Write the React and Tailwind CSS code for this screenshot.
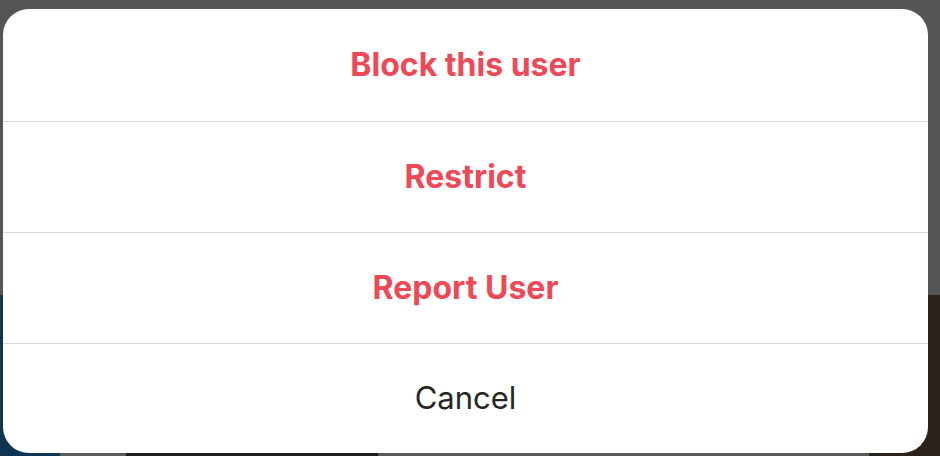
export default function App() {
  const actions = [
    { label: 'Block this user', h: 'h-[113px]' },
    { label: 'Restrict', h: 'h-[111px]' },
    { label: 'Report User', h: 'h-[111px]' },
  ];

  return (
    <div className="relative w-[940px] h-[456px] overflow-hidden bg-[#555555]" style={{ fontFamily: 'Inter, "Liberation Sans", sans-serif' }}>
      {/* page behind the dialog */}
      <div className="flex flex-col h-full">
        <div className="h-[295px] bg-[#555555]" />
        <div className="flex flex-1">
          <div className="w-[60px] bg-[#0f3452]" />
          <div className="w-[66px] bg-[#5a5a5a]" />
          <div className="w-[252px] bg-[#1e1e1e]" />
          <div className="flex-1 bg-[#585858]" />
          <div className="w-[71px] bg-[#2b221b]" />
        </div>
      </div>

      {/* dialog */}
      <div className="absolute left-[3px] top-[9px] w-[925px] h-[444px] bg-white rounded-[26px] flex flex-col overflow-hidden">
        {actions.map((a) => (
          <button
            key={a.label}
            className={`${a.h} shrink-0 flex items-center justify-center border-b border-[#d8d8d8] text-[32px] font-bold text-[#ed4956]`}
          >
            {a.label}
          </button>
        ))}
        <button className="flex-1 flex items-center justify-center text-[31px] text-[#262626]">
          Cancel
        </button>
      </div>
    </div>
  );
}
